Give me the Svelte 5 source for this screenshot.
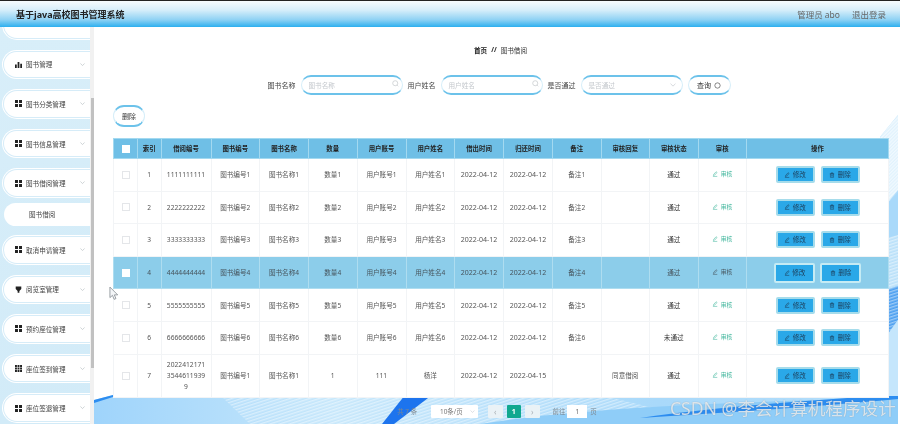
<script>
  const nav = [
    { t: '图书管理', i: 'bars' },
    { t: '图书分类管理', i: 'grid' },
    { t: '图书信息管理', i: 'grid' },
    { t: '图书借阅管理', i: 'grid', sub: '图书借阅' },
    { t: '取消申请管理', i: 'grid' },
    { t: '阅览室管理', i: 'shield' },
    { t: '预约座位管理', i: 'grid' },
    { t: '座位签到管理', i: 'nine' },
    { t: '座位签退管理', i: 'grid' }
  ];
  const widths = [24, 23.5, 50, 48.5, 49, 48.5, 49, 48.5, 49, 49, 48.5, 48.5, 48.5, 48.5, 142];
  const heads = ['', '索引', '借阅编号', '图书编号', '图书名称', '数量', '用户账号', '用户姓名', '借出时间', '归还时间', '备注', '审核回复', '审核状态', '审核', '操作'];
  const rows = [1, 2, 3, 4, 5, 6].map((n) => ({
    n, no: String(n).repeat(10), b: '图书编号' + n, name: '图书名称' + n, q: '数量' + n,
    acc: '用户账号' + n, user: '用户姓名' + n, out: '2022-04-12', back: '2022-04-12', note: '备注' + n,
    reply: '', st: n === 6 ? '未通过' : '通过'
  }));
  rows.push({ n: 7, no: '20224121713544611939' + '9', b: '图书编号1', name: '图书名称1', q: '1', acc: '111', user: '杨洋', out: '2022-04-12', back: '2022-04-15', note: '', reply: '同意借阅', st: '通过' });
</script>

{#snippet pen()}
  <svg class="ic" viewBox="0 0 10 10"><path d="M6.8 1.2 8.4 2.6 4.2 7 2.4 7.4 2.8 5.6ZM1.5 9H8.8" fill="none" stroke="currentColor" stroke-width="0.9"/></svg>
{/snippet}

<div class="app">
  <header class="top">
    <div class="title">基于java高校图书管理系统</div>
    <div class="user"><span>管理员 abo</span><span>退出登录</span></div>
  </header>
  <div class="body">
    <aside class="side">
      <div class="nav">
        <div class="item"></div>
        {#each nav as m}
          <div class="item">
            <span class="nicon">
              {#if m.i === 'bars'}
                <svg viewBox="0 0 8 8"><path d="M0 4h2v4H0zM3 1h2v7H3zM6 3h2v5H6z" fill="#222"/></svg>
              {:else if m.i === 'grid'}
                <svg viewBox="0 0 8 8"><path d="M0 0h3.4v3.4H0zM4.6 0H8v3.4H4.6zM0 4.6h3.4V8H0zM4.6 4.6H8V8H4.6z" fill="#222"/></svg>
              {:else if m.i === 'shield'}
                <svg viewBox="0 0 8 8"><path d="M0.8 0.5h6.4v3L5 5.6V7.6H3V5.6L.8 3.5z" fill="#222"/></svg>
              {:else}
                <svg viewBox="0 0 8 8"><path d="M0 0h2.2v2.2H0zM2.9 0h2.2v2.2H2.9zM5.8 0H8v2.2H5.8zM0 2.9h2.2v2.2H0zM2.9 2.9h2.2v2.2H2.9zM5.8 2.9H8v2.2H5.8zM0 5.8h2.2V8H0zM2.9 5.8h2.2V8H2.9zM5.8 5.8H8V8H5.8z" fill="#222"/></svg>
              {/if}
            </span>
            <span class="ntext">{m.t}</span>
            <svg class="chev" viewBox="0 0 8 5"><path d="M.7.8 4 4 7.3.8" fill="none" stroke="#aab2b8" stroke-width=".9"/></svg>
          </div>
          {#if m.sub}
            <div class="sub">{m.sub}</div>
          {/if}
        {/each}
      </div>
    </aside>
    <div class="track"><div class="thumb"></div></div>
    <main class="main">
      <svg class="bg" viewBox="94 27 806 397" preserveAspectRatio="none" aria-hidden="true">
        <defs>
          <linearGradient id="base" x1="0" y1="0" x2="1" y2="0">
            <stop offset="0" stop-color="#9fd4fb"/>
            <stop offset="0.3" stop-color="#c6e7fb"/>
            <stop offset="0.7" stop-color="#a9d9fa"/>
            <stop offset="1" stop-color="#b4defb"/>
          </linearGradient>
          <pattern id="st" width="3" height="3" patternUnits="userSpaceOnUse" patternTransform="rotate(-18)">
            <rect width="3" height="1.4" fill="#ffffff" opacity=".45"/>
          </pattern>
          <pattern id="st2" width="2.4" height="2.4" patternUnits="userSpaceOnUse" patternTransform="rotate(-45)">
            <rect width="2.4" height="1.2" fill="#ffffff" opacity=".55"/>
          </pattern>
        </defs>
        <path d="M94 400 113 395H880V137L898 115V424H94Z" fill="url(#base)"/>
        <path d="M220 395H600L720 424H250Z" fill="url(#st)"/>
        <path d="M480 424C580 408 720 402 898 398V424Z" fill="#8fcdf8"/>
        <path d="M640 418C720 406 800 402 898 394V399C800 408 720 413 640 418Z" fill="#2d8df0"/>
        <path d="M880 137 898 115V190L880 212Z" fill="#e0f2fd"/>
        <path d="M880 137 898 115V190L880 212Z" fill="url(#st2)"/>
        <path d="M880 212 898 192V235L880 240Z" fill="#a9d9fa"/>
        <path d="M880 240 898 235V285L880 292Z" fill="#b9e0f9"/>
        <path d="M880 240 898 235V285L880 292Z" fill="url(#st)"/>
        <path d="M880 292 898 286 898 320 880 345Z" fill="#4b9ff0"/>
        <path d="M880 292 898 286 898 320 880 345Z" fill="url(#st)"/>
        <path d="M880 345 898 320V396H880Z" fill="#c5e6fc"/>
        <path d="M405 395H432L394 424H382Z" fill="#1d74ee"/>
        <path d="M94 400 113 395V397L94 403Z" fill="#2d8df0"/>
      </svg>

      <div class="crumb"><b>首页</b><b class="sl">//</b><span>图书借阅</span></div>

      <div class="search">
        <span class="lab">图书名称</span>
        <div class="field"><span>图书名称</span><svg class="mag" viewBox="0 0 10 10"><circle cx="4.6" cy="4.6" r="3.6" fill="none" stroke="#c4c8cc"/><path d="M7.4 7.4 9 9" stroke="#c4c8cc"/></svg></div>
        <span class="lab">用户姓名</span>
        <div class="field"><span>用户姓名</span><svg class="mag" viewBox="0 0 10 10"><circle cx="4.6" cy="4.6" r="3.6" fill="none" stroke="#c4c8cc"/><path d="M7.4 7.4 9 9" stroke="#c4c8cc"/></svg></div>
        <span class="lab">是否通过</span>
        <div class="field"><span>是否通过</span><svg class="mag drop" viewBox="0 0 8 5"><path d="M.7.8 4 4 7.3.8" fill="none" stroke="#c4c8cc" stroke-width=".9"/></svg></div>
        <button class="pill qbtn">查询<svg viewBox="0 0 10 10"><circle cx="5" cy="5" r="3.8" fill="none" stroke="#555"/></svg></button>
      </div>

      <button class="pill delbtn">删除</button>

      <table>
        <colgroup>
          {#each widths as w}<col style="width:{w}px" />{/each}
        </colgroup>
        <thead>
          <tr>
            {#each heads as h, i}
              <th>{#if i === 0}<span class="cb on"></span>{:else}{h}{/if}</th>
            {/each}
          </tr>
        </thead>
        <tbody>
          {#each rows as r}
            <tr class:hot={r.n === 4} class:tall={r.n === 7}>
              <td><span class="cb" class:on={r.n === 4}></span></td>
              <td>{r.n}</td>
              <td class="no">{r.no}</td>
              <td>{r.b}</td>
              <td>{r.name}</td>
              <td>{r.q}</td>
              <td>{r.acc}</td>
              <td>{r.user}</td>
              <td class="date">{r.out}</td>
              <td class="date">{r.back}</td>
              <td>{r.note}</td>
              <td>{r.reply}</td>
              <td class="st">{r.st}</td>
              <td class="audit">{@render pen()}审核</td>
              <td>
                <div class="ops">
                  <button class="op">{@render pen()}修改</button>
                  <button class="op"><svg class="ic" viewBox="0 0 10 10"><path d="M2.4 3H7.6V9H2.4ZM1.4 3H8.6M3.8 3V1.3H6.2V3M4 4.5V7.5M6 4.5V7.5" fill="none" stroke="currentColor" stroke-width=".8"/></svg>删除</button>
                </div>
              </td>
            </tr>
          {/each}
        </tbody>
      </table>

      <div class="pager">
        <span class="ptx">共 7 条</span>
        <div class="psel">10条/页<svg viewBox="0 0 8 5"><path d="M.7.8 4 4 7.3.8" fill="none" stroke="#c0c4cc" stroke-width=".9"/></svg></div>
        <div class="pn">‹</div>
        <div class="pn act">1</div>
        <div class="pn">›</div>
        <span class="ptx go">前往</span>
        <div class="pin">1</div>
        <span class="ptx">页</span>
      </div>
    </main>
  </div>

  <svg class="cursor" viewBox="0 0 12 16" aria-hidden="true"><path d="M1 1V12.5L3.8 10 5.6 14.4 7.6 13.5 5.8 9.5H9.5Z" fill="#f4f6f8" stroke="#7b8288" stroke-width=".8"/></svg>
  <div class="mark">CSDN @李会计算机程序设计</div>
</div>

<style>
  :global(body) { margin: 0; background: #fff; }
  .app {
    position: relative;
    width: 900px;
    height: 424px;
    overflow: hidden;
    display: flex;
    flex-direction: column;
    font-family: "Noto Sans", "Noto Sans CJK SC", sans-serif;
    color: #606266;
    filter: blur(0.35px);
  }
  .top {
    height: 26px;
    flex: none;
    border-top: 1px solid #222;
    display: flex;
    align-items: center;
    justify-content: space-between;
    padding: 0 14px 0 16px;
    background: linear-gradient(180deg, #f6fbfe 0%, #d6eefa 35%, #8fd2f4 72%, #2cafef 100%);
  }
  .title { font-size: 9px; font-weight: 700; color: #222; }
  .user { display: flex; gap: 12px; font-size: 8.5px; color: #666; }
  .body { flex: 1; display: flex; min-height: 0; }
  .side {
    width: 90px;
    flex: none;
    overflow: hidden;
    background: linear-gradient(180deg, #d8eef9, #d2ebf8);
  }
  .nav {
    display: flex;
    flex-direction: column;
    gap: 14px;
    margin-top: -15px;
    padding: 0 0 0 4px;
  }
  .item {
    height: 25.6px;
    flex: none;
    display: flex;
    align-items: center;
    background: #fff;
    border-radius: 14px 0 0 14px;
    box-shadow: 0 0 0 1px #d6ecf8, 0 0 0 2px #fff;
    position: relative;
    font-size: 6.6px;
    color: #444;
  }
  .nicon { width: 7px; height: 7px; margin-left: 11px; display: flex; }
  .nicon svg { width: 7px; height: 7px; }
  .ntext { margin-left: 4px; white-space: nowrap; }
  .chev { position: absolute; left: 76px; top: 11px; width: 5px; height: 3.2px; }
  .sub {
    height: 23px;
    flex: none;
    margin: -7px 0 -3px;
    padding-left: 25px;
    display: flex;
    align-items: center;
    background: #fff;
    border-radius: 12px 0 0 12px;
    font-size: 6.6px;
    color: #444;
  }
  .track { width: 4px; flex: none; background: #f1f1f1; padding-top: 71px; box-sizing: border-box; }
  .thumb { width: 3px; margin-left: 1px; height: 270px; background: #c1c1c1; }
  .main {
    flex: 1;
    position: relative;
    min-width: 0;
    padding: 0 12px 0 19px;
    display: flex;
    flex-direction: column;
    background: #fff;
  }
  .bg { position: absolute; inset: 0; width: 100%; height: 100%; }
  .main > :not(.bg) { position: relative; }
  .crumb {
    margin-top: 18px;
    height: 9px;
    flex: none;
    display: flex;
    justify-content: center;
    align-items: center;
    gap: 4px;
    font-size: 6.6px;
    color: #333;
  }
  .crumb b { color: #222; }
  .search {
    margin-top: 21px;
    height: 20px;
    flex: none;
    display: flex;
    justify-content: center;
    align-items: center;
    margin-left: -8px;
    font-size: 7px;
  }
  .lab { color: #444; margin: 0 5px; white-space: nowrap; }
  .field {
    width: 102px;
    height: 20px;
    box-sizing: border-box;
    position: relative;
    display: flex;
    align-items: center;
    padding-left: 7px;
    border-style: solid;
    border-color: #6cc2ea #d6eef9;
    border-width: 2px 1px;
    border-radius: 11px;
    background: #fff;
    color: #c3c7cc;
    font-size: 6.6px;
  }
  .mag { position: absolute; right: 3px; top: 3px; width: 7px; height: 7px; }
  .drop { width: 6px; height: 4px; top: 6px; right: 6px; }
  .pill {
    font: inherit;
    box-sizing: border-box;
    border-style: solid;
    border-color: #6cc2ea #d6eef9;
    border-width: 2px 1px;
    background: #fff;
    color: #333;
    border-radius: 11px;
    padding: 0;
    display: flex;
    align-items: center;
    justify-content: center;
    gap: 3px;
    font-size: 7px;
  }
  .qbtn { width: 43px; height: 20px; margin-left: 5px; flex: none; }
  .qbtn svg { width: 7px; height: 7px; }
  .delbtn { width: 32px; height: 22px; margin-top: 10px; flex: none; align-self: flex-start; }
  table {
    margin-top: 11px;
    width: 775px;
    flex: none;
    table-layout: fixed;
    border-collapse: collapse;
    background: #fff;
    font-size: 6.6px;
    text-align: center;
  }
  th {
    height: 19px;
    padding: 0;
    background: #6fbfe6;
    border: 1px solid #a3d9f0;
    font-size: 6.4px;
    font-weight: 700;
    color: #222;
  }
  td {
    height: 31.6px;
    padding: 0;
    border: 1px solid #f2f4f6;
    color: #555;
    line-height: 11px;
  }
  .no { padding: 0 5px; word-break: break-all; font-size: 6.7px; }
  .date { font-size: 7px; }
  .st { color: #333; }
  .hot td { background: #8ccdea; border-color: #aeddf0; color: #46545d; }
  .tall td { height: 42px; }
  .cb {
    display: block;
    width: 6px;
    height: 6px;
    margin: 0 auto;
    border: 0.8px solid #e4e6e9;
    background: #fff;
  }
  .cb.on { border-color: #fff; }
  .audit { color: #3eb59b; font-size: 5.8px; }
  .ic { width: 6px; height: 6px; margin-right: 2.5px; vertical-align: -0.8px; }
  .ops { display: flex; justify-content: center; gap: 6px; }
  .op {
    font: inherit;
    font-size: 6.6px;
    width: 39px;
    height: 17px;
    padding: 0;
    box-sizing: border-box;
    background: #2aa8e8;
    border: 2px solid #a6dceb;
    border-radius: 2px;
    color: #1d3d58;
    display: flex;
    align-items: center;
    justify-content: center;
  }
  .hot .op { width: 41px; height: 20px; border-color: #c5ebf4; margin: 0 -0.5px; }
  .pager {
    margin: 7px 0 0 -7px;
    height: 13px;
    flex: none;
    display: flex;
    align-items: center;
    justify-content: center;
    font-size: 6.4px;
    color: #7d8790;
  }
  .ptx { white-space: nowrap; }
  .psel {
    width: 47px;
    height: 13px;
    margin: 0 10px 0 14px;
    background: #fff;
    border-radius: 1px;
    display: flex;
    align-items: center;
    justify-content: space-between;
    padding: 0 3px 0 9px;
    box-sizing: border-box;
    color: #777;
  }
  .psel svg { width: 5px; height: 3px; }
  .pn {
    width: 14.5px;
    height: 13px;
    margin-right: 4px;
    background: #eaf2f6;
    border-radius: 1px;
    display: flex;
    align-items: center;
    justify-content: center;
    color: #a9b0b6;
    font-size: 8px;
  }
  .pn.act { background: #0fa88f; color: #fff; font-weight: 700; font-size: 7px; }
  .go { margin-left: 9px; }
  .pin {
    width: 20px;
    height: 13px;
    margin: 0 3px 0 2px;
    background: #fff;
    display: flex;
    align-items: center;
    justify-content: center;
    color: #666;
  }
  .cursor { position: absolute; left: 109px; top: 286px; width: 11px; height: 15px; }
  .mark {
    position: absolute;
    left: 670px;
    top: 395px;
    font-size: 17.6px;
    line-height: 26px;
    white-space: nowrap;
    color: rgba(255, 255, 255, 0.72);
    text-shadow: 0 0 1px rgba(90, 100, 110, 0.55);
  }
</style>
